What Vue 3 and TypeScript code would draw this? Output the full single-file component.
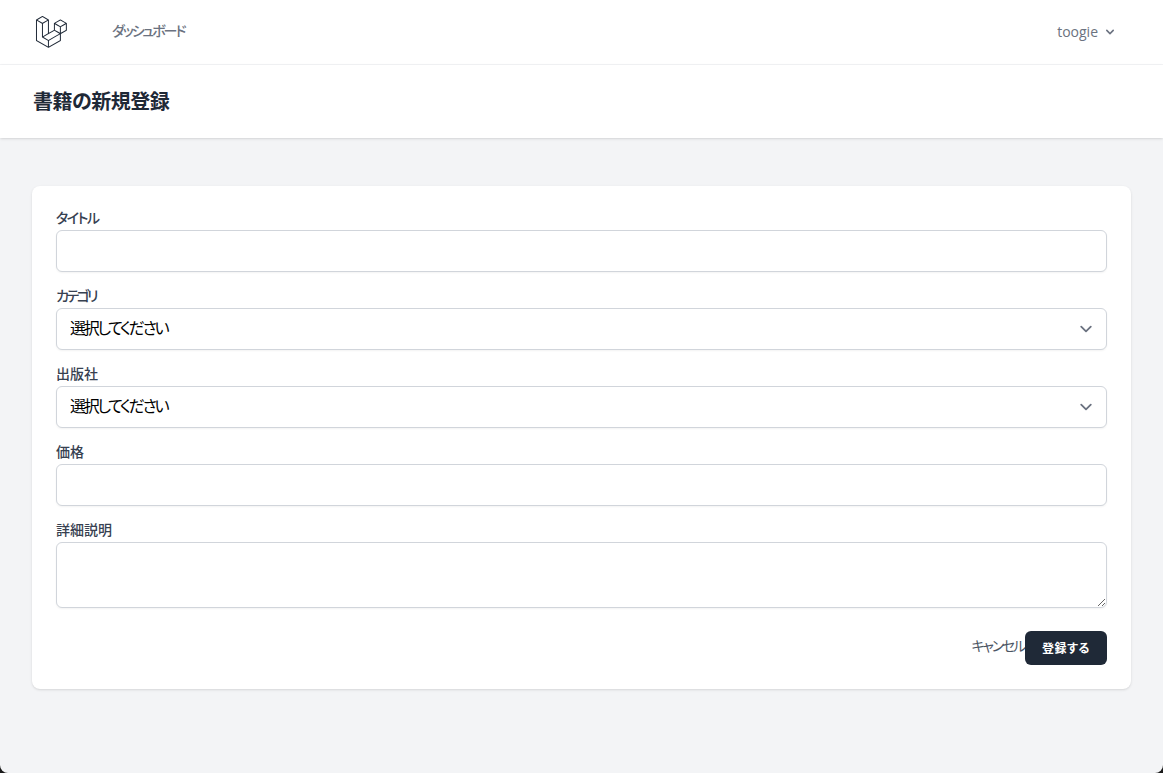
<template>
  <div class="page">
    <nav class="nav">
      <div class="nav-left">
        <svg class="logo" viewBox="0 0 316 316" xmlns="http://www.w3.org/2000/svg">
          <path d="M305.8 81.125C305.77 80.995 305.69 80.885 305.65 80.755C305.56 80.525 305.49 80.285 305.37 80.075C305.29 79.935 305.17 79.815 305.07 79.685C304.94 79.515 304.83 79.325 304.68 79.175C304.55 79.045 304.39 78.955 304.25 78.845C304.09 78.715 303.95 78.575 303.77 78.475L251.32 48.275C249.97 47.495 248.31 47.495 246.96 48.275L194.51 78.475C194.33 78.575 194.19 78.725 194.03 78.845C193.89 78.955 193.73 79.045 193.6 79.175C193.45 79.325 193.34 79.515 193.21 79.685C193.11 79.815 192.99 79.935 192.91 80.075C192.79 80.295 192.71 80.525 192.63 80.755C192.58 80.875 192.51 80.995 192.48 81.125C192.38 81.495 192.33 81.875 192.33 82.265V139.625L148.62 164.795V52.575C148.62 52.185 148.57 51.805 148.47 51.435C148.44 51.305 148.36 51.195 148.32 51.065C148.23 50.835 148.16 50.595 148.04 50.385C147.96 50.245 147.84 50.125 147.74 49.995C147.61 49.825 147.5 49.635 147.35 49.485C147.22 49.355 147.06 49.265 146.92 49.155C146.76 49.025 146.62 48.885 146.44 48.785L93.99 18.585C92.64 17.805 90.98 17.805 89.63 18.585L37.18 48.785C37 48.885 36.86 49.035 36.7 49.155C36.56 49.265 36.4 49.355 36.27 49.485C36.12 49.635 36.01 49.825 35.88 49.995C35.78 50.125 35.66 50.245 35.58 50.385C35.46 50.605 35.38 50.835 35.3 51.065C35.25 51.185 35.18 51.305 35.15 51.435C35.05 51.805 35 52.185 35 52.575V232.235C35 233.795 35.84 235.245 37.19 236.025L142.1 296.425C142.33 296.555 142.58 296.635 142.83 296.725C142.95 296.765 143.06 296.835 143.18 296.865C143.55 296.965 143.93 297.015 144.31 297.015C144.69 297.015 145.07 296.965 145.44 296.865C145.56 296.835 145.67 296.765 145.79 296.725C146.04 296.635 146.29 296.565 146.52 296.425L251.43 236.025C252.78 235.245 253.62 233.805 253.62 232.235V174.885L303.79 146.005C305.14 145.225 305.98 143.785 305.98 142.215V82.265C305.98 81.875 305.93 81.495 305.83 81.125H305.8ZM144.2 227.205L100.57 202.515L146.39 176.135L196.66 147.195L240.33 172.335L208.29 190.625L144.2 227.205ZM244.75 114.995V164.795L226.39 154.225L201.03 139.625V89.825L219.39 100.395L244.75 114.995ZM249.12 57.105L292.81 82.265L249.12 107.425L205.43 82.265L249.12 57.105ZM114.49 184.425L96.13 194.995V85.305L121.49 70.705L139.85 60.135V169.815L114.49 184.425ZM91.76 27.425L135.45 52.585L91.76 77.745L48.07 52.585L91.76 27.425ZM43.67 60.135L62.03 70.705L87.39 85.305V202.545V202.555V202.565C87.39 202.735 87.44 202.895 87.46 203.055C87.49 203.265 87.49 203.485 87.55 203.695V203.705C87.6 203.875 87.69 204.035 87.76 204.195C87.84 204.375 87.89 204.575 87.99 204.745C87.99 204.745 87.99 204.755 88 204.755C88.09 204.905 88.22 205.035 88.33 205.175C88.45 205.335 88.55 205.495 88.69 205.635L88.7 205.645C88.82 205.765 88.98 205.855 89.12 205.965C89.28 206.085 89.42 206.225 89.59 206.325C89.6 206.325 89.6 206.325 89.61 206.335C89.62 206.335 89.62 206.345 89.63 206.345L139.87 234.775V285.065L43.67 229.705V60.135ZM244.75 229.705L148.58 285.075V234.775L219.8 194.115L244.75 179.875V229.705ZM297.2 139.625L253.49 164.795V114.995L278.85 100.395L297.21 89.825V139.625H297.2Z" />
        </svg>
        <a class="nav-link">ダッシュボード</a>
      </div>
      <div class="user">
        <span>{{ userName }}</span>
        <svg class="user-caret" viewBox="0 0 20 20">
          <path fill-rule="evenodd" clip-rule="evenodd" d="M5.293 7.293a1 1 0 011.414 0L10 10.586l3.293-3.293a1 1 0 111.414 1.414l-4 4a1 1 0 01-1.414 0l-4-4a1 1 0 010-1.414z" />
        </svg>
      </div>
    </nav>

    <header class="header">
      <h2>書籍の新規登録</h2>
    </header>

    <main class="main">
      <form class="card" @submit.prevent>
        <div v-for="field in fields" :key="field.label" class="field">
          <label class="label" :style="{ letterSpacing: field.tracking }">{{ field.label }}</label>
          <div v-if="field.type === 'select'" class="select-wrap">
            <select class="control select">
              <option>選択してください</option>
            </select>
            <svg class="select-arrow" viewBox="0 0 20 20" fill="none">
              <path d="M6 8l4 4 4-4" stroke="#6b7280" stroke-width="1.5" stroke-linecap="round" stroke-linejoin="round" />
            </svg>
          </div>
          <textarea v-else-if="field.type === 'textarea'" class="control textarea"></textarea>
          <input v-else class="control" type="text" />
        </div>

        <div class="actions">
          <a class="cancel">キャンセル</a>
          <button class="submit" type="submit">登録する</button>
        </div>
      </form>
    </main>
  </div>
</template>

<script setup lang="ts">
type FieldType = 'text' | 'select' | 'textarea'

const userName = 'toogie'

const fields: { label: string; type: FieldType; tracking: string }[] = [
  { label: 'タイトル', type: 'text', tracking: '-1.5px' },
  { label: 'カテゴリ', type: 'select', tracking: '-2.6px' },
  { label: '出版社', type: 'select', tracking: '0' },
  { label: '価格', type: 'text', tracking: '0' },
  { label: '詳細説明', type: 'textarea', tracking: '0' }
]
</script>

<style>
html,
body {
  background: #1a1a1a;
}
</style>

<style scoped>
.page {
  min-height: 100vh;
  box-sizing: border-box;
  background: #f3f4f6;
  border-radius: 0 0 8px 8px;
  overflow: hidden;
  font-family: 'Open Sans', 'Noto Sans CJK JP', sans-serif;
  font-feature-settings: 'palt';
  color: #111827;
}

.nav {
  height: 64px;
  padding: 0 32px;
  display: flex;
  justify-content: space-between;
  background: #fff;
  border-bottom: 1px solid #f3f4f6;
}

.nav-left {
  display: flex;
  align-items: center;
}

.logo {
  width: 36px;
  height: 36px;
  fill: #1f2937;
}

.nav-link {
  margin-left: 44px;
  padding-bottom: 4px;
  font-size: 14px;
  font-weight: 500;
  letter-spacing: -2.1px;
  color: #6b7280;
}

.user {
  display: flex;
  align-items: center;
  padding-right: 13px;
  font-size: 14px;
  color: #6b7280;
}

.user span {
  padding-bottom: 2px;
}

.user-caret {
  width: 16px;
  height: 16px;
  margin-left: 4px;
  fill: currentColor;
}

.header {
  padding: 24px 32px 24px 33px;
  background: #fff;
  box-shadow: 0 1px 3px 0 rgba(0, 0, 0, 0.1), 0 1px 2px -1px rgba(0, 0, 0, 0.1);
}

.header h2 {
  margin: 0;
  font-size: 20px;
  line-height: 25px;
  font-weight: 600;
  letter-spacing: -0.5px;
  color: #1f2937;
}

.main {
  padding: 48px 32px;
}

.card {
  padding: 24px;
  background: #fff;
  border-radius: 8px;
  box-shadow: 0 1px 3px 0 rgba(0, 0, 0, 0.1), 0 1px 2px -1px rgba(0, 0, 0, 0.1);
}

.field {
  margin-bottom: 16px;
}

.label {
  display: block;
  padding-bottom: 4px;
  font-size: 14px;
  line-height: 16px;
  font-weight: 500;
  color: #374151;
}

.control {
  display: block;
  width: 100%;
  height: 42px;
  box-sizing: border-box;
  padding: 8px 12px;
  background: #fff;
  border: 1px solid #d1d5db;
  border-radius: 6px;
  box-shadow: 0 1px 2px 0 rgba(0, 0, 0, 0.05);
  font: inherit;
  font-size: 16px;
  color: #000;
}

.select-wrap {
  position: relative;
}

.select {
  appearance: none;
  padding: 7px 40px 9px 13px;
  letter-spacing: -2.3px;
}

.select-arrow {
  position: absolute;
  top: 9px;
  right: 9px;
  width: 24px;
  height: 24px;
  pointer-events: none;
}

.textarea {
  height: 66px;
}

.actions {
  display: flex;
  justify-content: flex-end;
  align-items: center;
  margin-top: 23px;
}

.cancel {
  margin-right: 1px;
  padding-bottom: 6px;
  font-size: 14px;
  letter-spacing: -2.2px;
  color: #4b5563;
}

.submit {
  width: 82px;
  height: 34px;
  padding: 0;
  border: 0;
  border-radius: 6px;
  background: #1f2937;
  color: #fff;
  font: inherit;
  font-size: 12px;
  font-weight: 700;
  letter-spacing: 0.6px;
}
</style>
